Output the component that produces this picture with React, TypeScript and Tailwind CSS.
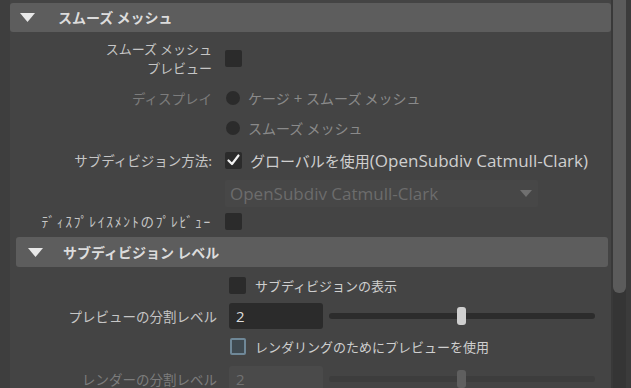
import React from "react";

const F = { fontFamily: '"Noto Sans CJK JP", "Noto Sans", sans-serif' };
const L = { fontFamily: '"Open Sans", "Noto Sans CJK JP", sans-serif' };

function Tri({ className = "" }: { className?: string }) {
  return (
    <svg width="15" height="9" viewBox="0 0 15 9" className={className}>
      <polygon points="0,0 15,0 7.5,9" fill="#e8e8e8" />
    </svg>
  );
}

function Box({ checked = false }: { checked?: boolean }) {
  return (
    <div className="w-[17px] h-[17px] rounded-[2px] bg-[#2b2b2b] flex items-center justify-center shrink-0">
      {checked && (
        <svg width="13" height="12" viewBox="0 0 13 12">
          <path d="M1.5 6.5 L5 10 L11.5 1.5" stroke="#f2f2f2" strokeWidth="2.2" fill="none" strokeLinecap="round" strokeLinejoin="round" />
        </svg>
      )}
    </div>
  );
}

function Radio() {
  return <div className="w-[14px] h-[14px] rounded-full bg-[#2b2b2b] shrink-0" />;
}

function Slider({ disabled = false }: { disabled?: boolean }) {
  return (
    <div className="relative w-[266px] h-[18px] ml-[6px] flex items-center">
      <div className={`w-full h-[6px] rounded-full ${disabled ? "bg-[#3d3d3d]" : "bg-[#2c2c2c]"}`} />
      <div
        className={`absolute left-[128px] top-0 w-[9px] h-[18px] rounded-[3px] ${disabled ? "bg-[#5f5f5f]" : "bg-[#cfcfcf]"}`}
      />
    </div>
  );
}

export default function App() {
  return (
    <div className="w-[631px] h-[388px] overflow-hidden flex bg-[#444444] text-[13.5px] leading-[19px]" style={F}>
      <div className="w-[10px] h-full bg-[#3e3e3e] shrink-0" />
      <div className="w-[601px] h-full flex flex-col pt-[3px] shrink-0">
        {/* header 1 */}
        <div className="h-[29px] rounded-[3px] bg-[#5d5d5d] flex items-center shrink-0">
          <Tri className="ml-[10px]" />
          <span className="ml-[23px] text-[14px] font-bold text-[#dcdcdc]">スムーズ メッシュ</span>
        </div>
        {/* section 1 */}
        <div className="flex flex-col mt-[4px] text-[#c6c6c6]">
          <div className="h-[44px] flex items-center">
            <div className="w-[202px] text-right text-[13px]">
              <div>スムーズ メッシュ</div>
              <div>プレビュー</div>
            </div>
            <div className="ml-[13px]"><Box /></div>
          </div>
          <div className="h-[36px] flex items-center">
            <div className="w-[202px] text-right text-[#7c7c7c]">ディスプレイ</div>
            <div className="ml-[14px] flex items-center gap-[8px] text-[#8a8a8a] text-[14px]">
              <Radio />
              <span>ケージ<span style={L} className="text-[15px]"> + </span>スムーズ メッシュ</span>
            </div>
          </div>
          <div className="h-[24px] flex items-center">
            <div className="w-[202px]" />
            <div className="ml-[14px] flex items-center gap-[8px] text-[#8a8a8a] text-[14px]">
              <Radio />
              <span>スムーズ メッシュ</span>
            </div>
          </div>
          <div className="h-[40px] flex items-center">
            <div className="w-[202px] text-right">サブディビジョン方法:</div>
            <div className="ml-[13px] flex items-center gap-[8px] text-[#cfcfcf]">
              <Box checked />
              <span className="text-[15px] whitespace-nowrap">
                グローバルを使用<span style={L} className="text-[17px]">(OpenSubdiv Catmull-Clark)</span>
              </span>
            </div>
          </div>
          <div className="h-[27px] flex items-center">
            <div className="w-[202px]" />
            <div className="ml-[13px] w-[313px] h-[27px] bg-[#474747] rounded-[2px] flex items-center justify-between pl-[5px] pr-[6px]">
              <span style={L} className="text-[17px] text-[#6c6c6c]">OpenSubdiv Catmull-Clark</span>
              <svg width="12" height="7" viewBox="0 0 12 7">
                <polygon points="0,0 12,0 6,7" fill="#707070" />
              </svg>
            </div>
          </div>
          <div className="h-[28px] flex items-center">
            <div className="w-[202px] text-right tracking-[1.8px] whitespace-nowrap">ﾃﾞｨｽﾌﾟﾚｲｽﾒﾝﾄのﾌﾟﾚﾋﾞｭｰ</div>
            <div className="ml-[13px]"><Box /></div>
          </div>
        </div>
        {/* header 2 */}
        <div className="mt-[2px] ml-[6px] w-[592px] h-[30px] rounded-[3px] bg-[#5d5d5d] flex items-center shrink-0">
          <Tri className="ml-[12px]" />
          <span className="ml-[20px] text-[14px] font-bold text-[#dcdcdc]">サブディビジョン レベル</span>
        </div>
        {/* section 2 */}
        <div className="flex flex-col text-[#c6c6c6]">
          <div className="h-[36px] flex items-center">
            <div className="w-[207px]" />
            <div className="ml-[12px] flex items-center gap-[9px] text-[#cfcfcf] text-[13px]">
              <Box />
              <span>サブディビジョンの表示</span>
            </div>
          </div>
          <div className="h-[26px] flex items-center">
            <div className="w-[207px] text-right">プレビューの分割レベル</div>
            <div style={L} className="ml-[12px] w-[94px] h-[26px] rounded-[3px] bg-[#2b2b2b] flex items-center pl-[7px] text-[15px] text-[#dddddd]">2</div>
            <Slider />
          </div>
          <div className="h-[34px] flex items-center">
            <div className="w-[207px]" />
            <div className="ml-[13px] flex items-center gap-[9px] text-[#cfcfcf] text-[13px]">
              <div className="w-[16px] h-[17px] rounded-[2px] border-2 border-[#6f8898] bg-[#3f4a51] shrink-0" />
              <span>レンダリングのためにプレビューを使用</span>
            </div>
          </div>
          <div className="mt-[3px] h-[26px] flex items-center">
            <div className="w-[207px] text-right text-[#7c7c7c]">レンダーの分割レベル</div>
            <div style={L} className="ml-[12px] w-[94px] h-[26px] rounded-[3px] bg-[#4a4a4a] flex items-center pl-[7px] text-[15px] text-[#717171]">2</div>
            <Slider disabled />
          </div>
        </div>
      </div>
      <div className="w-[2px] h-full bg-[#393939] shrink-0" />
      <div className="w-[13px] h-full bg-[#353535] shrink-0 flex flex-col">
        <div className="h-[293px] w-full bg-[#5b5b5b] rounded-b-[6px]" />
      </div>
      <div className="w-[5px] h-full bg-[#3b3b3b] shrink-0" />
    </div>
  );
}
